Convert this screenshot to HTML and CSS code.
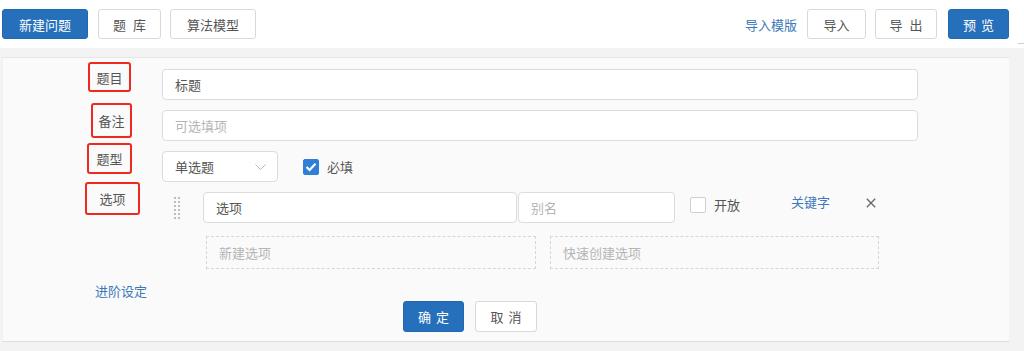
FILE: index.html
```html
<!DOCTYPE html>
<html lang="zh">
<head>
<meta charset="utf-8">
<title>题目编辑</title>
<link rel="stylesheet" href="styles.css">
</head>
<body>
<header class="toolbar">
  <div class="toolbar-left">
    <button class="btn btn-primary btn-wide">新建问题</button>
    <button class="btn btn-default btn-narrow spaced">题库</button>
    <button class="btn btn-default btn-wide">算法模型</button>
  </div>
  <div class="toolbar-right">
    <a class="link template-link">导入模版</a>
    <button class="btn btn-default btn-import">导入</button>
    <button class="btn btn-default btn-export spaced">导出</button>
    <button class="btn btn-primary btn-preview spaced-sm">预览</button>
  </div>
</header>
<main class="main">
  <section class="panel">
    <div class="row">
      <div class="label-cell"><span class="q-label q-label-1">题目</span></div>
      <div class="field"><div class="input">标题</div></div>
    </div>
    <div class="row">
      <div class="label-cell"><span class="q-label q-label-2">备注</span></div>
      <div class="field"><div class="input placeholder">可选填项</div></div>
    </div>
    <div class="row">
      <div class="label-cell"><span class="q-label q-label-3">题型</span></div>
      <div class="field type-field">
        <div class="select">
          <span>单选题</span>
          <svg class="chevron" width="11" height="6" viewBox="0 0 11 6"><path d="M0.5 0.5 L5.5 5.5 L10.5 0.5" fill="none" stroke="#b8b8b8" stroke-width="1"/></svg>
        </div>
        <label class="check">
          <span class="box box-checked"><svg width="12" height="10" viewBox="0 0 12 10"><path d="M1.5 5 L4.6 8 L10.5 1.8" fill="none" stroke="#fff" stroke-width="2.2"/></svg></span>
          <span class="check-text">必填</span>
        </label>
      </div>
    </div>
    <div class="row option-row">
      <div class="label-cell"><span class="q-label q-label-4">选项</span></div>
      <div class="option-field">
        <span class="drag-handle"><i></i><i></i><i></i><i></i><i></i><i></i><i></i><i></i><i></i><i></i><i></i><i></i></span>
        <div class="input option-input">选项</div>
        <div class="input alias-input placeholder">别名</div>
        <label class="check open-check">
          <span class="box"></span>
          <span class="check-text">开放</span>
        </label>
        <a class="link keyword-link">关键字</a>
        <svg class="remove" width="10" height="10" viewBox="0 0 10 10"><path d="M0.8 0.8 L9.2 9.2 M9.2 0.8 L0.8 9.2" stroke="#666" stroke-width="1.3"/></svg>
      </div>
    </div>
    <div class="new-row">
      <div class="dashed">新建选项</div>
      <div class="dashed">快速创建选项</div>
    </div>
    <div class="advanced"><a class="link">进阶设定</a></div>
    <div class="actions">
      <button class="btn btn-primary btn-ok spaced-sm">确定</button>
      <button class="btn btn-default btn-cancel spaced-sm">取消</button>
    </div>
  </section>
</main>
</body>
</html>
```
FILE: styles.css
```css
* { box-sizing: border-box; }
html, body { margin: 0; padding: 0; }
body {
  width: 1024px;
  height: 351px;
  overflow: hidden;
  background: #f3f3f3;
  font-family: "Noto Sans CJK SC", "Noto Sans", sans-serif;
  font-size: 13px;
  color: #555;
}
.toolbar {
  position: relative;
  height: 48px;
  background: #fff;
  display: flex;
  justify-content: space-between;
  align-items: flex-start;
  padding: 9px 15px 0 2px;
}
.toolbar::after {
  content: "";
  position: absolute;
  right: 0;
  top: 43px;
  width: 6px;
  height: 1px;
  background: #cfcfcf;
}
.toolbar-left, .toolbar-right {
  display: flex;
  align-items: center;
}
.btn {
  height: 30px;
  border-radius: 3px;
  font-family: inherit;
  font-size: 13px;
  padding: 0;
  display: inline-flex;
  align-items: center;
  justify-content: center;
  cursor: pointer;
}
.spaced { letter-spacing: 7px; text-indent: 7px; }
.spaced-sm { letter-spacing: 5px; text-indent: 5px; }
.btn-primary {
  background: #2670bb;
  border: 1px solid #2268b0;
  color: #fff;
}
.btn-default {
  background: #fff;
  border: 1px solid #d9d9d9;
  color: #555;
}
.btn-wide { width: 86px; }
.btn-narrow { width: 63px; }
.toolbar-left .btn + .btn { margin-left: 10px; }
.toolbar-left .btn-narrow + .btn { margin-left: 9px; }
.link {
  color: #3d79ba;
  cursor: pointer;
}
.template-link { margin-right: 10px; }
.btn-import { width: 59px; margin-right: 9px; }
.btn-export { width: 62px; margin-right: 11px; }
.btn-preview { width: 61px; }

.main {
  padding: 9px 15px 0 2px;
}
.panel {
  height: 285px;
  background: #fafafa;
  border-top: 1px solid #e6e6e6;
  border-bottom: 1px solid #dedede;
  border-left: 1px solid #f0f0f0;
  padding-top: 11px;
}
.row {
  display: flex;
  height: 31px;
  margin-bottom: 10px;
  padding-right: 91px;
}
.label-cell {
  width: 159px;
  flex: none;
}
.q-label {
  display: flex;
  align-items: center;
  justify-content: center;
  border: 2px solid #ee2a1e;
  border-radius: 3px;
  color: #555;
}
.q-label-1 { margin: -7px 0 0 85px; width: 43px; height: 30px; }
.q-label-2 { margin: -7px 0 0 88px; width: 41px; height: 35px; }
.q-label-3 { margin: -8px 0 0 84px; width: 45px; height: 31px; }
.q-label-4 { margin: -10px 0 0 82px; width: 55px; height: 33px; }
.field {
  flex: 1;
  display: flex;
}
.input {
  flex: 1;
  height: 31px;
  background: #fff;
  border: 1px solid #dcdcdc;
  border-radius: 4px;
  padding: 0 12px;
  display: flex;
  align-items: center;
  color: #555;
}
.placeholder { color: #b5b5b5; }
.type-field { align-items: center; }
.select {
  width: 116px;
  height: 31px;
  background: #fff;
  border: 1px solid #dcdcdc;
  border-radius: 4px;
  display: flex;
  align-items: center;
  justify-content: space-between;
  padding: 0 11px 0 12px;
  color: #555;
}
.check {
  display: flex;
  align-items: center;
}
.type-field .check { margin-left: 25px; }
.box {
  width: 16px;
  height: 16px;
  border-radius: 2px;
  border: 1px solid #cfcfcf;
  background: #fff;
  display: inline-flex;
  align-items: center;
  justify-content: center;
}
.box-checked {
  background: #2f7fd6;
  border-color: #2f7fd6;
}
.check-text { margin-left: 8px; color: #555; }

.option-field {
  flex: 1;
  display: flex;
  align-items: flex-start;
}
.drag-handle {
  display: grid;
  grid-template-columns: 2px 2px;
  grid-auto-rows: 2px;
  column-gap: 2px;
  row-gap: 2px;
  margin: 5px 0 0 12px;
  width: 6px;
}
.drag-handle i {
  display: block;
  width: 2px;
  height: 2px;
  background: #bdbdbd;
}
.option-input {
  flex: none;
  width: 314px;
  margin-left: 23px;
}
.alias-input {
  flex: none;
  width: 157px;
  margin-left: 1px;
}
.open-check {
  margin: 3px 0 0 15px;
}
.keyword-link {
  margin: 2px 0 0 51px;
  line-height: 16px;
}
.remove { margin: 6px 0 0 36px; }

.new-row {
  display: flex;
  margin: 13px 0 0 203px;
}
.dashed {
  height: 33px;
  border: 1px dashed #d6d6d6;
  display: flex;
  align-items: center;
  padding-left: 12px;
  color: #b5b5b5;
}
.dashed:first-child { width: 330px; }
.dashed:last-child { width: 329px; margin-left: 14px; }
.advanced {
  margin: 12px 0 0 92px;
  height: 20px;
  line-height: 20px;
}
.actions {
  display: flex;
  margin: 0 0 0 400px;
}
.btn-ok { width: 61px; height: 31px; }
.btn-cancel { width: 62px; height: 31px; margin-left: 11px; }
```
